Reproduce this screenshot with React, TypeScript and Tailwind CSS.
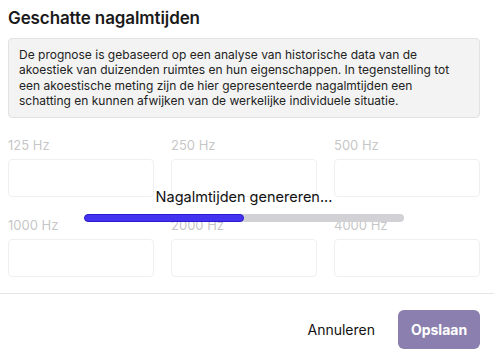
import React from 'react';

const bands = ['125 Hz', '250 Hz', '500 Hz', '1000 Hz', '2000 Hz', '4000 Hz'];

export default function App() {
  const progress = 50;

  return (
    <div className="w-[494px] h-[359px] bg-white text-[#1a1a1a] overflow-hidden" style={{ fontFamily: 'Inter, "Noto Sans", sans-serif' }}>
      <div className="pl-2 pr-[14px] pt-[6px]">
        <h2 className="text-[17px] leading-[24px] font-semibold tracking-[-0.1px]">Geschatte nagalmtijden</h2>

        {/* Info */}
        <div className="mt-[8px] rounded-[4px] border border-[#e2e2e2] bg-[#f3f3f3] px-[10px] py-[8px] text-[12px] leading-[15.4px] text-[#222]">
          De prognose is gebaseerd op een analyse van historische data van de
          <br />
          akoestiek van duizenden ruimtes en hun eigenschappen. In tegenstelling tot
          <br />
          een akoestische meting zijn de hier gepresenteerde nagalmtijden een
          <br />
          schatting en kunnen afwijken van de werkelijke individuele situatie.
        </div>

        {/* Frequency inputs */}
        <div className="relative mt-[18px]">
          <div className="grid grid-cols-3 gap-x-[17px] gap-y-[19px]">
            {bands.map(b => (
              <div key={b}>
                <div className="text-[13px] leading-[18px] text-[#707070]">{b}</div>
                <div className="mt-[5px] h-[38px] rounded-[4px] border border-[#d8d8d8] bg-white" />
              </div>
            ))}
          </div>

          <div className="absolute inset-0 bg-white/60 flex flex-col items-center justify-center">
            <div className="text-[14.5px] leading-[18px] text-[#111] mt-[-2px]">Nagalmtijden genereren...</div>
            <div className="mt-[8px] h-[8px] w-[320px] rounded-full bg-[#d2d2d6] overflow-hidden">
              <div className="h-full rounded-full bg-[#4433ee] border border-[#2a1ad0]" style={{ width: `${progress}%` }} />
            </div>
          </div>
        </div>
      </div>

      <div className="mt-[16px] border-t border-[#e5e5e5]" />

      {/* Footer */}
      <div className="flex items-center justify-end gap-[8px] px-[14px] pt-[16px]">
        <button className="px-[15px] h-[39px] text-[14px] text-[#111]">Annuleren</button>
        <button className="w-[82px] h-[39px] rounded-[6px] bg-[#8a7fae] text-white text-[14px] font-bold">Opslaan</button>
      </div>
    </div>
  );
}
